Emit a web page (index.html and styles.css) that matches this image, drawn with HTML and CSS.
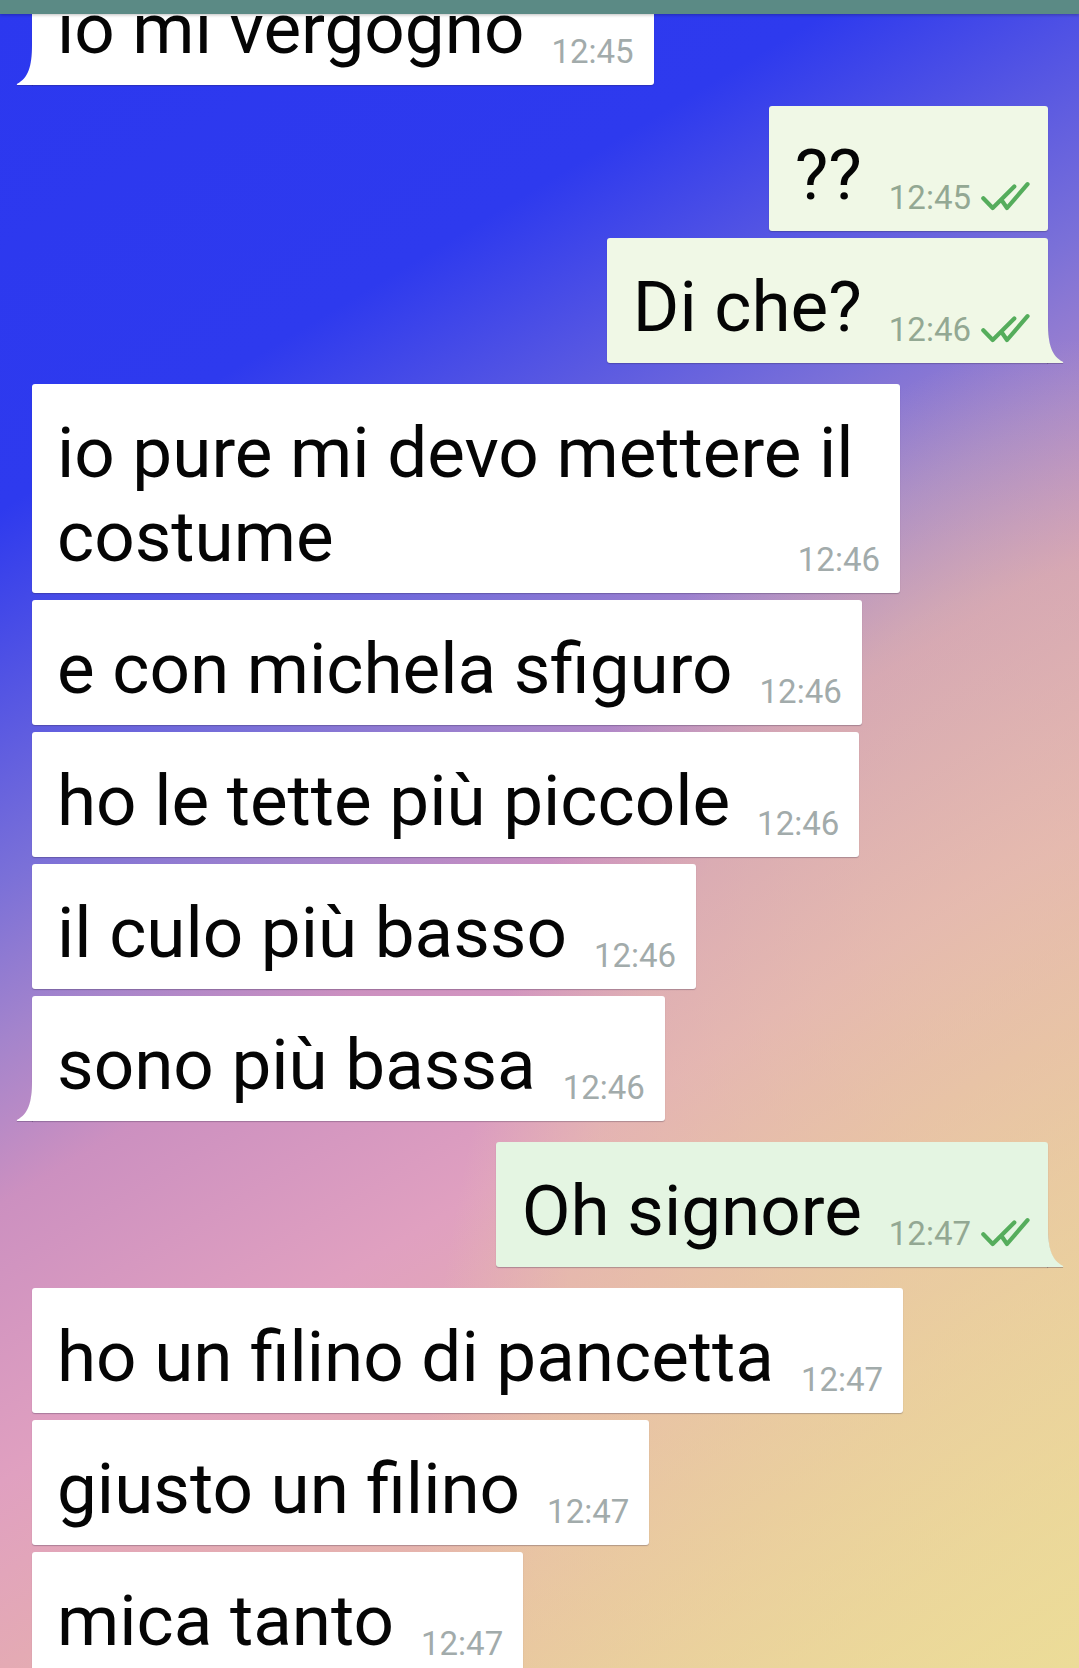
FILE: index.html
```html
<!DOCTYPE html>
<html lang="it">
<head>
<meta charset="utf-8">
<title>Chat</title>
<link rel="stylesheet" href="styles.css">
</head>
<body>
<div class="screen">
  <div class="topbar"></div>
  <main class="chat">
    <section class="group group--in">
      <div class="msg msg--in has-tail">
        <span class="text">io mi vergogno</span>
        <span class="meta"><span class="time">12:45</span></span>
        <svg class="tail" viewBox="0 0 17 40"><path d="M16 0 L17 0 L17 40 L1.5 40 Q0 40 1.2 38.8 C12 33 16 22 16 0 Z"/></svg>
      </div>
    </section>

    <section class="group group--out">
      <div class="msg msg--out">
        <span class="text">??</span>
        <span class="meta"><span class="time">12:45</span>
          <svg class="ticks" viewBox="0 0 48 28"><path d="M2.3 16.3 L11.7 26 L33.3 4.5 M21.7 19.7 L26 26 L46.5 2.2"/></svg>
        </span>
      </div>
      <div class="msg msg--out has-tail">
        <span class="text">Di che?</span>
        <span class="meta"><span class="time">12:46</span>
          <svg class="ticks" viewBox="0 0 48 28"><path d="M2.3 16.3 L11.7 26 L33.3 4.5 M21.7 19.7 L26 26 L46.5 2.2"/></svg>
        </span>
        <svg class="tail" viewBox="0 0 17 40"><path d="M16 0 L17 0 L17 40 L1.5 40 Q0 40 1.2 38.8 C12 33 16 22 16 0 Z"/></svg>
      </div>
    </section>

    <section class="group group--in">
      <div class="msg msg--in msg--wrap">
        <span class="text">io pure mi devo mettere il costume</span><span class="meta"><span class="time">12:46</span></span>
      </div>
      <div class="msg msg--in">
        <span class="text">e con michela sfiguro</span>
        <span class="meta"><span class="time">12:46</span></span>
      </div>
      <div class="msg msg--in">
        <span class="text">ho le tette più piccole</span>
        <span class="meta"><span class="time">12:46</span></span>
      </div>
      <div class="msg msg--in">
        <span class="text">il culo più basso</span>
        <span class="meta"><span class="time">12:46</span></span>
      </div>
      <div class="msg msg--in has-tail">
        <span class="text">sono più bassa</span>
        <span class="meta"><span class="time">12:46</span></span>
        <svg class="tail" viewBox="0 0 17 40"><path d="M16 0 L17 0 L17 40 L1.5 40 Q0 40 1.2 38.8 C12 33 16 22 16 0 Z"/></svg>
      </div>
    </section>

    <section class="group group--out">
      <div class="msg msg--out msg--green has-tail">
        <span class="text">Oh signore</span>
        <span class="meta"><span class="time">12:47</span>
          <svg class="ticks" viewBox="0 0 48 28"><path d="M2.3 16.3 L11.7 26 L33.3 4.5 M21.7 19.7 L26 26 L46.5 2.2"/></svg>
        </span>
        <svg class="tail" viewBox="0 0 17 40"><path d="M16 0 L17 0 L17 40 L1.5 40 Q0 40 1.2 38.8 C12 33 16 22 16 0 Z"/></svg>
      </div>
    </section>

    <section class="group group--in">
      <div class="msg msg--in">
        <span class="text">ho un filino di pancetta</span>
        <span class="meta"><span class="time">12:47</span></span>
      </div>
      <div class="msg msg--in">
        <span class="text">giusto un filino</span>
        <span class="meta"><span class="time">12:47</span></span>
      </div>
      <div class="msg msg--in">
        <span class="text">mica tanto</span>
        <span class="meta"><span class="time">12:47</span></span>
      </div>
    </section>
  </main>
</div>
</body>
</html>
```

FILE: styles.css
```css
html, body {
  margin: 0;
  padding: 0;
}

body {
  font-family: Roboto, "Noto Sans", sans-serif;
}

.screen {
  position: relative;
  width: 1079px;
  height: 1668px;
  overflow: hidden;
  background:
    radial-gradient(700px 1400px at 100% 100%,
      rgba(236, 220, 152, 0.7) 0%,
      rgba(236, 220, 152, 0.55) 35%,
      rgba(236, 220, 152, 0.42) 60%,
      rgba(236, 220, 152, 0.32) 78%,
      rgba(236, 220, 152, 0) 95%),
    linear-gradient(149deg,
      #2c38ef 0%,
      #2e3aee 22%,
      #7a70d8 38%,
      #a484cc 45%,
      #cc90c0 52%,
      #e0a0c0 64%,
      #e4aab4 72%,
      #e8c0a4 85%,
      #ecdc98 100%);
}

.topbar {
  position: fixed;
  top: 0;
  left: 0;
  right: 0;
  height: 14px;
  background: #5b8a85;
  box-shadow: 0 1px 3px rgba(0, 0, 0, 0.25);
  z-index: 10;
}

.chat {
  display: flex;
  flex-direction: column;
  gap: 21px;
  margin-top: -40px;
  padding: 0 31px 0 32px;
}

.group {
  display: flex;
  flex-direction: column;
  gap: 7px;
}

.group--in {
  align-items: flex-start;
}

.group--out {
  align-items: flex-end;
}

.msg {
  position: relative;
  display: flex;
  align-items: flex-end;
  box-sizing: border-box;
  max-width: 874px;
  padding: 27px 20px 14px 25px;
  background: #ffffff;
  border-radius: 3px;
  box-shadow: 0 1px 1px rgba(40, 30, 60, 0.28);
}

.msg--out {
  background: #f0f8e6;
  padding-left: 26px;
  padding-right: 19px;
}

.msg--green {
  background: #e4f5e2;
}

.msg--in.has-tail {
  border-bottom-left-radius: 0;
}

.msg--out.has-tail {
  border-bottom-right-radius: 0;
}

.text {
  font-size: 71px;
  line-height: 84px;
  color: #050505;
  font-weight: 400;
}

.meta {
  flex: none;
  display: flex;
  align-items: flex-end;
  gap: 10px;
  margin-left: 27px;
}

.time {
  font-size: 33px;
  line-height: 38px;
  white-space: nowrap;
  color: #a2abab;
}

.msg--out .time {
  color: #93a893;
}

.ticks {
  width: 48px;
  height: 28px;
  margin-bottom: 7px;
  overflow: visible;
}

.ticks path {
  fill: none;
  stroke: #55ad5c;
  stroke-width: 4.2;
  stroke-linecap: round;
  stroke-linejoin: round;
}

/* multi-line bubble: time floats into the last text line */
.msg--wrap {
  display: block;
  max-width: 868px;
}

.msg--wrap .meta {
  display: inline-flex;
  float: right;
  margin-top: 46px;
  margin-left: 27px;
}

.tail {
  position: absolute;
  bottom: 0;
  width: 17px;
  height: 40px;
  filter: drop-shadow(0 1px 0.5px rgba(40, 30, 60, 0.28));
}

.msg--in .tail {
  left: -16px;
  fill: #ffffff;
}

.msg--out .tail {
  right: -16px;
  transform: scaleX(-1);
  fill: #f0f8e6;
}

.msg--green .tail {
  fill: #e4f5e2;
}
```
